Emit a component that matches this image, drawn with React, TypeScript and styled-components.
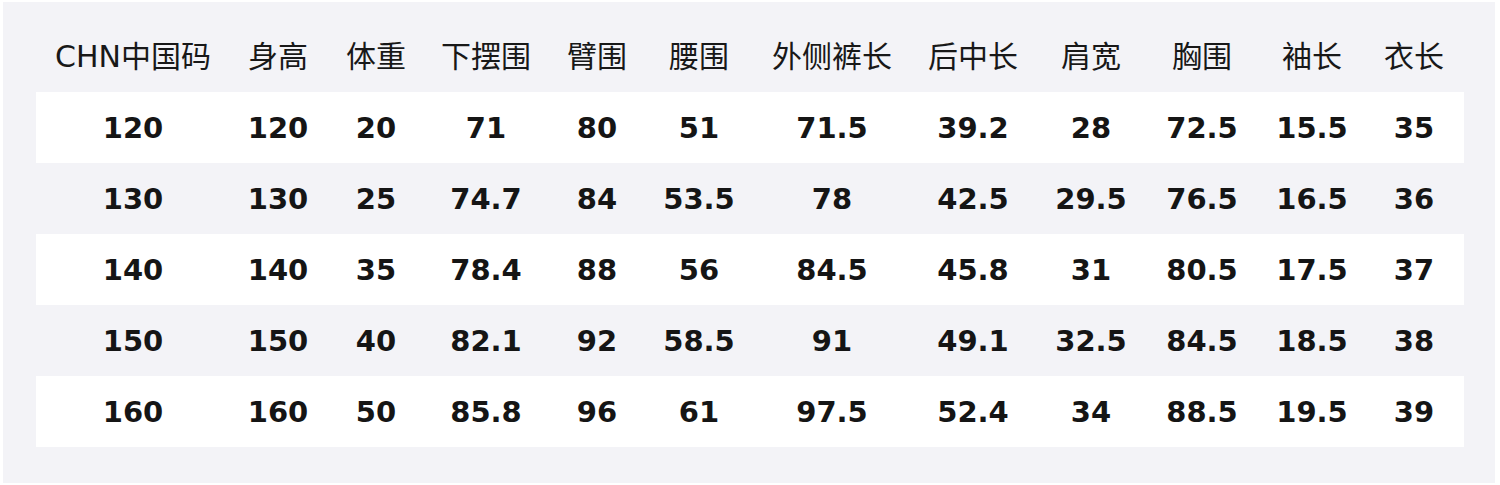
import React from "react";
import styled, { createGlobalStyle } from "styled-components";

const Global = createGlobalStyle`
  html, body { margin: 0; padding: 0; background: #ffffff; }
  body { font-family: "DejaVu Sans", "Noto Sans CJK SC", sans-serif; }
`;

const Panel = styled.div`
  margin: 2px 5px 0 3px;
  height: 481px;
  box-sizing: border-box;
  background: #f3f3f7;
  padding: 20px 31px 0 33px;
`;

const COLS = "194px 96px 100px 120px 102px 102px 164px 118px 118px 104px 116px 88px";

const Row = styled.div<{ $white?: boolean; $head?: boolean }>`
  display: grid;
  grid-template-columns: ${COLS};
  height: ${(p) => (p.$head ? 70 : 71)}px;
  box-sizing: border-box;
  padding-bottom: ${(p) => (p.$head ? 6 : 0)}px;
  align-items: center;
  background: ${(p) => (p.$white ? "#ffffff" : "transparent")};
`;

const HeadCell = styled.div`
  text-align: center;
  font-family: "DejaVu Sans", "Noto Sans CJK SC", sans-serif;
  font-size: 30px;
  font-weight: 400;
  color: #181818;
  white-space: nowrap;
`;

const Cell = styled.div`
  text-align: center;
  font-family: "DejaVu Sans", "Noto Sans CJK SC", sans-serif;
  font-size: 29px;
  font-weight: 700;
  color: #151515;
  white-space: nowrap;
`;

const headers = ["CHN中国码", "身高", "体重", "下摆围", "臂围", "腰围", "外侧裤长", "后中长", "肩宽", "胸围", "袖长", "衣长"];

const data = [
  ["120", "120", "20", "71", "80", "51", "71.5", "39.2", "28", "72.5", "15.5", "35"],
  ["130", "130", "25", "74.7", "84", "53.5", "78", "42.5", "29.5", "76.5", "16.5", "36"],
  ["140", "140", "35", "78.4", "88", "56", "84.5", "45.8", "31", "80.5", "17.5", "37"],
  ["150", "150", "40", "82.1", "92", "58.5", "91", "49.1", "32.5", "84.5", "18.5", "38"],
  ["160", "160", "50", "85.8", "96", "61", "97.5", "52.4", "34", "88.5", "19.5", "39"],
];

export default function App() {
  return (
    <>
      <Global />
      <Panel>
        <Row $head>
          {headers.map((h) => (
            <HeadCell key={h}>{h}</HeadCell>
          ))}
        </Row>
        {data.map((r, i) => (
          <Row key={i} $white={i % 2 === 0}>
            {r.map((v, j) => (
              <Cell key={j}>{v}</Cell>
            ))}
          </Row>
        ))}
      </Panel>
    </>
  );
}
